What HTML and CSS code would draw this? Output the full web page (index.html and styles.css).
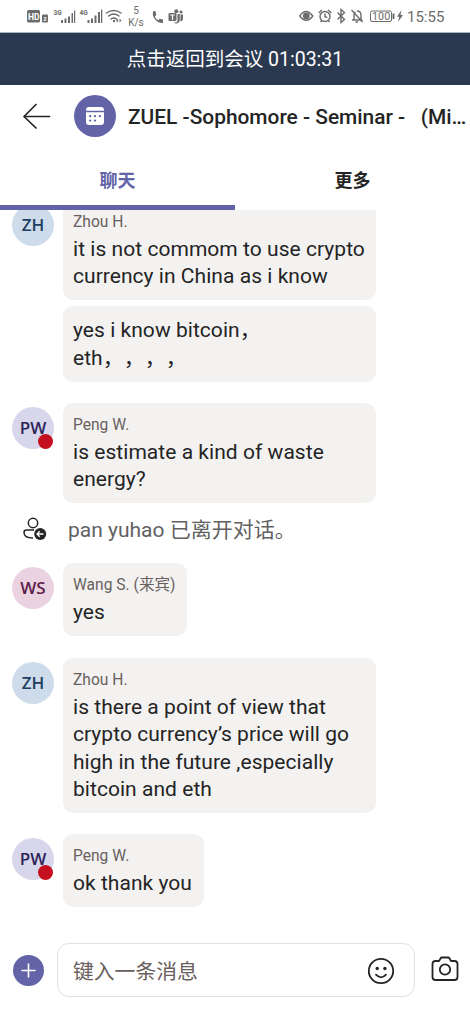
FILE: index.html
```html
<!DOCTYPE html>
<html lang="zh-CN">
<head>
<meta charset="utf-8">
<title>聊天</title>
<link rel="stylesheet" href="styles.css">
</head>
<body>
<div class="app">
  <div class="status">
    <svg class="status-left" width="98" height="25" viewBox="0 0 98 25" fill="#6c6c6c">
      <rect x="0" y="6" width="13" height="12.500" rx="1.500"/>
      <text class="hd" x="1" y="15.500">HD</text>
      <rect x="15" y="10.500" width="6" height="8" rx="1"/>
      <text class="sim" x="16.300" y="16.800">2</text>
      <text class="net" x="26.500" y="11">3G</text>
      <path d="M34 16h2v3h-2zM37.500 14.500h2V19h-2zM41 12.500h2V19h-2zM44.500 9h1.500v10h-1.500zM47 6.500h1.200V19H47z"/>
      <text class="net" x="52.500" y="11">4G</text>
      <path d="M60.500 16h2v3h-2zM64 14.500h2V19h-2zM67.500 11.500h2V19h-2zM71 8h2v11h-2zM74 5.500h1.300V19H74z"/>
      <g fill="none" stroke="#6c6c6c" stroke-width="1.500" stroke-linecap="round">
        <path d="M79.500 9q7-5 14.500 0M81.500 12q5-4 10.500 0M84 15q2.700-2 5.500 0"/>
      </g>
      <circle cx="87" cy="17" r="1.200"/>
      <path d="m91 14.500-2 2 2 2zM92.500 14.500l2 2-2 2z"/>
    </svg>
    <div class="speed"><span>5</span><span>K/s</span></div>
    <svg class="status-apps" width="34" height="18" viewBox="0 0 34 18" fill="#6c6c6c">
      <path d="M2.300 3c-2.200 5.800 3.700 12.600 9.700 12V11.600L8.700 10.800 7.300 12.200C5.700 11.400 4.500 10 3.900 8.400L5.200 7 4.700 3.300z"/>
      <rect x="17.500" y="5" width="8" height="8" rx="1"/>
      <circle cx="25.300" cy="3.200" r="2"/><circle cx="30" cy="4" r="1.600"/>
      <path d="M26.500 6h2.300v6c0 3-3.500 4.500-6.500 2.500h2.500c1.200 0 1.700-.8 1.700-1.700zM29.500 6.500H32v4c0 2-1.200 3-2.600 2.700z"/>
      <path d="M19.300 7h4.400M21.500 7v5" stroke="#fff" stroke-width="1.200"/>
    </svg>
    <svg class="status-right" width="106" height="18" viewBox="0 0 106 18" fill="none" stroke="#6c6c6c" stroke-width="1.400">
      <path d="M.8 9q6-9 13 0-6.500 8.500-13 0z"/><circle cx="7.300" cy="9" r="2.700" fill="#6c6c6c"/>
      <circle cx="26" cy="9.500" r="5"/><path d="M26 6.500v3.200l2.300 1M19.800 6l3-3M29.200 3l3 3M22.800 13.500 21.500 15M29.200 13.500l1.300 1.500"/>
      <path d="m38.500 5.500 7 7L42 15.500v-13l3.500 3-7 7"/>
      <path d="m52.500 3 11 12M53 13h8M55 13V8q0-2.500 1.500-3.200M58 4q4 0 4 4v4.500l1.500 1M56.500 15h2.500"/>
      <rect x="71.500" y="4" width="21" height="10.500" rx="1.500" stroke-width="1"/>
      <text class="battery" x="73" y="13.200">100</text>
      <path d="M94.500 6.500v5.500" stroke-width="2"/>
      <path d="M102.500 3 98 9.700h2.300L99 15l5-7h-2.500z" fill="#6c6c6c" stroke="none"/>
    </svg>
    <span class="clock">15:55</span>
  </div>
  <div class="banner">点击返回到会议 01:03:31</div>
  <header class="header">
    <svg class="back" width="28" height="26" viewBox="0 0 28 26" fill="none" stroke="#242424" stroke-width="1.700" stroke-linecap="round" stroke-linejoin="round"><path d="M26.500 13.500H1M13 1.500l-12 12 12 11.500"/></svg>
    <div class="meeting">
      <svg width="20" height="20" viewBox="0 0 20 20" fill="#fff"><path d="M1 4.800V4q0-3 3-3h12q3 0 3 3v.8zM1 6.200h18V16q0 3-3 3H4q-3 0-3-3z"/><g fill="#6264a7"><circle cx="5.200" cy="10.200" r="1.150"/><circle cx="10" cy="10.200" r="1.150"/><circle cx="14.800" cy="10.200" r="1.150"/><circle cx="5.200" cy="14.600" r="1.150"/><circle cx="10" cy="14.600" r="1.150"/></g></svg>
    </div>
    <h1 class="title">ZUEL -Sophomore - Seminar -&nbsp;&nbsp; (Mi…</h1>
  </header>
  <nav class="tabs"><div class="tab active">聊天</div><div class="tab">更多</div></nav>
  <main class="chat">
    <div class="messages">
      <div class="row"><div class="avatar zh">ZH</div><div class="bubble"><div class="name">Zhou H.</div><div class="text">it is not commom to use crypto<br>currency in China as i know</div></div></div>
      <div class="row follow"><div class="bubble"><div class="text">yes i know bitcoin<span class="comma">，</span><br>eth<span class="comma">，，，，</span></div></div></div>
      <div class="row gap"><div class="avatar pw">PW<i class="busy"></i></div><div class="bubble"><div class="name">Peng W.</div><div class="text">is estimate a kind of waste<br>energy?</div></div></div>
      <div class="system">
        <svg width="24" height="24" viewBox="0 0 24 24" fill="none" stroke="#242424" stroke-width="1.500"><circle cx="10" cy="6" r="4.700"/><path d="M11 13H3.500Q1 13 1 15.500q0 5.500 9 5.500"/><circle cx="17.200" cy="17" r="6" fill="#242424" stroke="none"/><path d="M20.500 17H14m2.700-2.800L14 17l2.700 2.800" stroke="#fff" stroke-width="1.300"/></svg>
        <span>pan yuhao 已离开对话。</span>
      </div>
      <div class="row"><div class="avatar ws">WS</div><div class="bubble guest"><div class="name">Wang S. (来宾)</div><div class="text">yes</div></div></div>
      <div class="row gap"><div class="avatar zh">ZH</div><div class="bubble"><div class="name">Zhou H.</div><div class="text">is there a point of view that<br>crypto currency’s price will go<br>high in the future ,especially<br>bitcoin and eth</div></div></div>
      <div class="row gap"><div class="avatar pw">PW<i class="busy"></i></div><div class="bubble thanks"><div class="name">Peng W.</div><div class="text">ok thank you</div></div></div>
    </div>
  </main>
  <footer class="composer">
    <div class="add"><svg width="15" height="15" viewBox="0 0 15 15" stroke="#fff" stroke-width="1.600" stroke-linecap="round"><path d="M7.500 1v13M1 7.500h13"/></svg></div>
    <div class="field"><span>键入一条消息</span>
      <svg class="smile" width="28" height="28" viewBox="0 0 28 28" fill="none" stroke="#242424" stroke-width="1.800" stroke-linecap="round"><circle cx="14" cy="14" r="12.200"/><path d="M9 17.700q5 5.200 10 0"/><g fill="#242424" stroke="none"><circle cx="10.200" cy="11.500" r="1.700"/><circle cx="17.900" cy="11.500" r="1.700"/></g></svg>
    </div>
    <svg class="camera" width="28" height="26" viewBox="0 0 28 26" fill="none" stroke="#242424" stroke-width="1.800" stroke-linejoin="round"><path d="M4.500 5H8l1.500-2.500Q10 1.500 11 1.500h6q1 0 1.500 1L20 5h3.500Q26.500 5 26.500 8v13q0 3-3 3h-19q-3 0-3-3V8q0-3 3-3z"/><circle cx="14" cy="13.500" r="5.200"/></svg>
  </footer>
</div>
</body>
</html>
```
FILE: styles.css
```css
* { box-sizing: border-box; }
body { margin: 0; background: #fff; color: #242424; font-family: Roboto, "Noto Sans CJK SC", sans-serif; text-spacing-trim: space-all; }
svg { display: block; flex: none; }
.app { width: 470px; height: 1019px; display: flex; flex-direction: column; overflow: hidden; }

.status { height: 33px; flex: none; display: flex; align-items: flex-start; padding-left: 27px; color: #6c6c6c; border-bottom: 1px solid #a9b4bf; }
.status-left { margin-top: 4px; }
.hd { font: 700 8.5px Roboto, sans-serif; fill: #fff; }
.sim { font: 700 6px Roboto, sans-serif; fill: #fff; }
.net { font: 700 6.5px Roboto, sans-serif; }
.battery { font: 10.800px Roboto, sans-serif; fill: #6c6c6c; stroke: none; }
.speed { width: 22px; display: flex; flex-direction: column; align-items: center; font-size: 10px; line-height: 12px; padding-top: 5px; }
.status-apps { margin: 8px 0 0 4px; }
.status-right { margin: 7px 0 0 114px; }
.clock { font-size: 15px; line-height: 18px; margin: 8px 0 0 2px; white-space: nowrap; }

.banner { height: 52px; flex: none; background: #2b3950; color: #fff; font-size: 19.500px; line-height: 53px; text-align: center; white-space: nowrap; }

.header { height: 62px; flex: none; display: flex; align-items: center; padding-left: 22.500px; }
.meeting { width: 42px; height: 42px; margin-left: 23.500px; border-radius: 50%; background: #6264a7; display: flex; align-items: center; justify-content: center; }
.title { margin: 2px 0 0 12px; font-size: 20.900px; font-weight: 500; white-space: nowrap; }

.tabs { height: 63px; flex: none; display: flex; }
.tab { flex: 1; text-align: center; font-size: 18px; font-weight: 700; line-height: 67px; border-bottom: 5px solid transparent; }
.active { color: #6264a7; border-color: #6264a7; }

.chat { flex: 1; min-height: 0; overflow: hidden; }
.messages { margin-top: -10.500px; }
.row { display: flex; padding-left: 12px; }
.follow { padding: 5.500px 0 0 63px; }
.gap { margin-top: 21.300px; }
.avatar { position: relative; flex: none; width: 42px; height: 42px; margin: 4px 9px 0 0; border-radius: 50%; font: 600 17px/41px "Open Sans", sans-serif; text-align: center; }
.zh { background: #cddbea; color: #203e61; }
.pw { background: #d8d6ea; color: #2d2459; }
.ws { background: #ebd2e1; color: #5b2149; }
.busy { position: absolute; right: 1px; bottom: 0; width: 15px; height: 15px; border-radius: 50%; background: #c50f1f; }
.bubble { width: 313px; padding: 11.500px 10px 9.500px; border-radius: 10px; background: #f3f2f1; }
.name { font-size: 15.600px; line-height: 20px; margin: .5px 0 4px; color: #69605e; white-space: nowrap; }
.text { font-size: 21px; line-height: 27.500px; white-space: nowrap; letter-spacing: .04px; }
.comma { font-family: "Noto Sans CJK SC", sans-serif; line-height: 1; }
.guest { width: 124px; }
.thanks { width: 141px; }
.system { height: 60px; display: flex; align-items: center; padding: 0 0 8px 23px; gap: 21px; font-size: 21px; color: #616161; white-space: nowrap; }
.system span { margin-top: -2px; }

.composer { height: 76px; flex: none; display: flex; align-items: flex-start; padding-left: 13px; }
.add { width: 31px; height: 31px; margin-top: 12px; border-radius: 50%; background: #6264a7; display: flex; align-items: center; justify-content: center; }
.field { width: 358px; height: 54px; margin-left: 13px; padding: 0 19px 0 15px; border: 1.500px solid #e1e1e1; border-radius: 12px; display: flex; align-items: center; justify-content: space-between; font-size: 20.800px; color: #69605e; }
.smile { margin-top: 2px; }
.camera { margin: 13px 0 0 16px; }
```
